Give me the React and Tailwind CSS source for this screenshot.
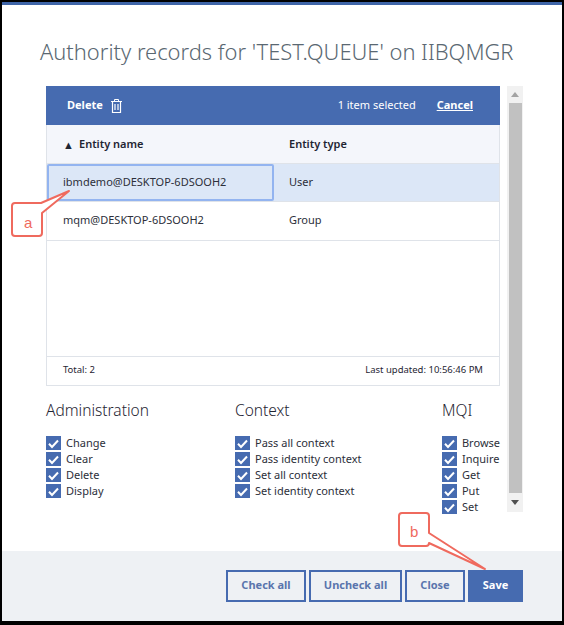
const font = "font-['Noto_Sans',sans-serif]";

const Check = ({ label }) => (
  <div className="flex items-center h-4">
    <span className="w-[15px] h-[14px] bg-[#466bb0] flex items-center justify-center shrink-0">
      <svg width="13" height="13" viewBox="0 0 13 13" fill="none">
        <path d="M2 6.8 L5 10 L11 3.5" stroke="white" strokeWidth="2" />
      </svg>
    </span>
    <span className="ml-[5px] text-[11px] text-[#2c2f3a] whitespace-nowrap">{label}</span>
  </div>
);

const Group = ({ title, items, className }) => (
  <div className={className}>
    <h3 className="text-[15.5px] leading-5 font-light text-[#1f2533] h-[27px]">{title}</h3>
    <div className="mt-[8px]">
      {items.map((i) => <Check key={i} label={i} />)}
    </div>
  </div>
);

const Row = ({ name, type, selected }) => (
  <div className={`flex border-b border-[#dfe3e9] text-[11px] text-[#2c2f3a] ${selected ? 'h-[38px] bg-[#dce7f7]' : 'h-[39px] pb-px bg-white'}`}>
    <div className={`w-[227px] flex items-center ${selected ? 'border-2 border-[#93b4f0] rounded-[2px] pl-[14px]' : 'pl-[16px]'}`}>{name}</div>
    <div className="flex items-center pl-[15px]">{type}</div>
  </div>
);

export default function App() {
  return (
    <div className={`w-[564px] h-[625px] bg-black pl-[2px] pr-[2px] pt-[2px] pb-[4px] ${font}`}>
      <div className="relative w-full h-full bg-white flex flex-col border-t-[3px] border-[#3f65a8]">
        <div className="flex-1 min-h-0 pl-[44px]">
          <h2 className="-ml-[6px] pt-[33px] text-[21.9px] leading-[28px] font-light text-[#5a6872] whitespace-nowrap">
            Authority records for 'TEST.QUEUE' on IIBQMGR
          </h2>
          <div className="mt-[20px] flex gap-[7px] h-[426px]">
            <div className="w-[454px]">
              <div className="border-x border-b border-[#dfe3e9]">
                <div className="-mx-px h-[39px] bg-[#466bb0] text-white text-[11px] flex items-center pl-[21px] pr-[27px]">
                  <span className="font-bold">Delete</span>
                  <svg className="ml-[8px] mt-[1px]" width="11" height="14" viewBox="0 0 11 14" fill="none" stroke="white">
                    <path d="M0 2.5 H11 M3.5 2.5 V0.5 H7.5 V2.5" />
                    <path d="M1.5 2.5 V13.5 H9.5 V2.5" strokeWidth="1.2" />
                    <path d="M4 5 V11 M7 5 V11" strokeWidth="1.2" />
                  </svg>
                  <span className="ml-auto">1 item selected</span>
                  <span className="ml-[21px] font-bold underline">Cancel</span>
                </div>
                <div className="flex h-[39px] bg-[#f4f6fb] border-b border-[#dfe3e9] text-[11px] font-semibold text-[#1f2533]">
                  <div className="w-[227px] flex items-center pl-[16px]">
                    <span className="w-[16px] text-[11px] leading-none">▲</span>Entity name
                  </div>
                  <div className="flex items-center pl-[15px]">Entity type</div>
                </div>
                <Row name="ibmdemo@DESKTOP-6DSOOH2" type="User" selected />
                <Row name="mqm@DESKTOP-6DSOOH2" type="Group" />
                <div className="h-[116px] border-b border-[#dfe3e9]" />
                <div className="h-[28px] pb-px flex items-center justify-between pl-[16px] pr-[16px] text-[9.5px] text-[#1f2533]">
                  <span>Total: 2</span>
                  <span>Last updated: 10:56:46 PM</span>
                </div>
              </div>
              <div className="flex mt-[14px]">
                <Group title="Administration" className="w-[189px]" items={['Change', 'Clear', 'Delete', 'Display']} />
                <Group title="Context" className="w-[207px]" items={['Pass all context', 'Pass identity context', 'Set all context', 'Set identity context']} />
                <Group title="MQI" items={['Browse', 'Inquire', 'Get', 'Put', 'Set']} />
              </div>
            </div>
            {/* scrollbar */}
            <div className="w-[16px] bg-[#f1f1f1] flex flex-col items-center">
              <div className="h-[17px] flex items-center justify-center text-[#a3a3a3]">
                <svg width="8" height="5" viewBox="0 0 8 5"><path d="M0 5 L4 0 L8 5 Z" fill="currentColor" /></svg>
              </div>
              <div className="flex-1 w-[13px] ml-[1px] bg-[#c1c1c1]" />
              <div className="h-[19px] flex items-center justify-center text-[#505050]">
                <svg width="8" height="5" viewBox="0 0 8 5"><path d="M0 0 L4 5 L8 0 Z" fill="currentColor" /></svg>
              </div>
            </div>
          </div>
        </div>
        <div className="h-[70px] bg-[#eef1f4] flex justify-end items-start gap-[3px] pt-[19px] pr-[39px] text-[11px] font-bold">
          <button className="w-[80px] h-[32px] pb-px border-2 border-[#466bb0] text-[#5a75ad]">Check all</button>
          <button className="w-[93px] h-[32px] pb-px border-2 border-[#466bb0] text-[#5a75ad]">Uncheck all</button>
          <button className="w-[60px] h-[32px] pb-px border-2 border-[#466bb0] text-[#5a75ad]">Close</button>
          <button className="w-[55px] h-[32px] pb-px bg-[#466bb0] text-white">Save</button>
        </div>

        {/* callouts */}
        <svg className="absolute left-[-2px] top-[-5px] pointer-events-none" width="564" height="625" fill="none">
          <path d="M15 203 H41 L69 191 L42 213 V233 Q42 236 39 236 H15 Q12 236 12 233 V206 Q12 203 15 203 Z" fill="white" stroke="#ef6a5e" strokeWidth="2" strokeLinejoin="round" />
          <path d="M402 513 H426 Q429 513 429 516 V533 L485 569 L429 543 V543 Q429 546 426 546 H402 Q399 546 399 543 V516 Q399 513 402 513 Z" fill="white" stroke="#ef6a5e" strokeWidth="2" strokeLinejoin="round" />
        </svg>
        <span className="absolute left-[22px] top-[208px] font-['Liberation_Sans',sans-serif] text-[15px] leading-5 text-[#ef6a5e]">a</span>
        <span className="absolute left-[408px] top-[517px] font-['Liberation_Sans',sans-serif] text-[15px] leading-5 text-[#ef6a5e]">b</span>
      </div>
    </div>
  );
}
